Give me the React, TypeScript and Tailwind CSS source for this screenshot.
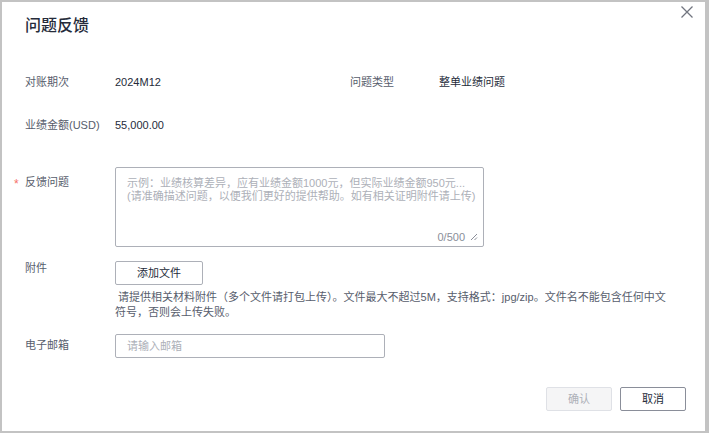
import React from "react";

const font = { fontFamily: '"Liberation Sans", "Noto Sans CJK SC", sans-serif' };

export default function App() {
  return (
    <div
      className="flex w-[709px] h-[433px] bg-[#c3c3c3] pl-[2px] pt-[2px] pr-[4px] pb-[2px] text-[11px] text-[#252b3a]"
      style={font}
    >
      <div className="relative flex-1 bg-white flex flex-col">
        <button className="absolute top-[3px] right-[11px] w-[14px] h-[14px] flex items-center justify-center">
          <svg width="14" height="14" viewBox="0 0 14 14">
            <path d="M1.5 1.5 L12.5 12.5 M12.5 1.5 L1.5 12.5" stroke="#71757f" strokeWidth="1.3" fill="none" />
          </svg>
        </button>

        <div className="pt-[12px] pl-[23px] h-[36px] text-[16px] leading-[24px] font-medium text-[#252b3a]">问题反馈</div>

        <div className="mt-[34px] flex h-[20px] leading-[20px] pl-[23px]">
          <div className="w-[90px] text-[#575d6c]">对账期次</div>
          <div className="w-[235px]">2024M12</div>
          <div className="w-[89px] text-[#575d6c]">问题类型</div>
          <div>整单业绩问题</div>
        </div>

        <div className="mt-[23px] flex h-[20px] leading-[20px] pl-[23px]">
          <div className="w-[90px] text-[#575d6c]">业绩金额(USD)</div>
          <div>55,000.00</div>
        </div>

        <div className="mt-[32px] flex pl-[23px]">
          <div className="relative w-[90px] pt-[5px] leading-[20px] text-[#575d6c]">
            <span className="absolute left-[-11px] top-[7px] text-[#f66f6a] text-[12px] leading-[20px]">*</span>
            反馈问题
          </div>
          <div className="relative w-[369px] h-[80px] border border-[#adb0b8] rounded-[2px] pl-[11px] pt-[9px] text-[#adb0b8] leading-[13px]">
            <div>示例：业绩核算差异，应有业绩金额1000元，但实际业绩金额950元...</div>
            <div>(请准确描述问题，以便我们更好的提供帮助。如有相关证明附件请上传)</div>
            <div className="absolute right-[5px] bottom-[2px] flex items-center gap-[5px] text-[#8a8e99] leading-[14px]">
              <span>0/500</span>
              <svg width="8" height="8" viewBox="0 0 8 8">
                <path d="M7 1 L1 7 M7 4.5 L4.5 7" stroke="#8a8e99" strokeWidth="1" fill="none" />
              </svg>
            </div>
          </div>
        </div>

        <div className="mt-[14px] flex pl-[23px]">
          <div className="w-[90px] mt-[-3px] leading-[20px] text-[#575d6c]">附件</div>
          <div className="flex flex-col">
            <div className="w-[88px] h-[24px] border border-[#adb0b8] rounded-[2px] flex items-center justify-center">添加文件</div>
            <div className="mt-[5px] w-[558px] leading-[15px] text-[#575d6c]">
              {"\u00a0请提供相关材料附件（多个文件请打包上传）。文件最大不超过5M，支持格式：jpg/zip。文件名不能包含任何中文符号，否则会上传失败。"}
            </div>
          </div>
        </div>

        <div className="mt-[14px] flex items-center pl-[23px]">
          <div className="w-[90px] mt-[-2px] leading-[20px] text-[#575d6c]">电子邮箱</div>
          <div className="w-[270px] h-[24px] border border-[#adb0b8] rounded-[2px] pl-[11px] flex items-center text-[#adb0b8]">请输入邮箱</div>
        </div>

        <div className="mt-[29px] flex justify-end gap-[8px] pr-[19px]">
          <div className="w-[66px] h-[24px] border border-[#dfe1e6] bg-[#f5f5f6] rounded-[2px] flex items-center justify-center text-[#adb0b8]">确认</div>
          <div className="w-[66px] h-[24px] border border-[#8a8e99] rounded-[2px] flex items-center justify-center text-[#252b3a]">取消</div>
        </div>
      </div>
    </div>
  );
}
